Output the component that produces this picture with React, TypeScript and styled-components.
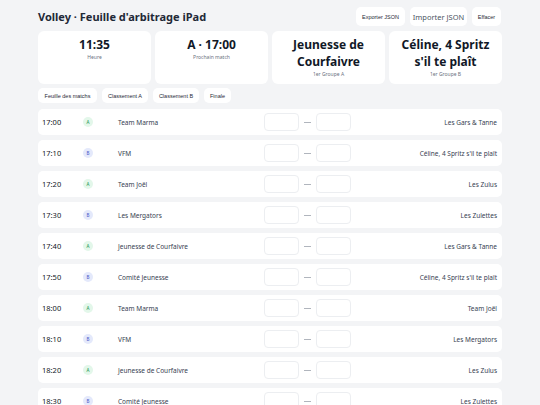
import React from "react";
import styled, { createGlobalStyle } from "styled-components";

const Global = createGlobalStyle`
  html, body { margin: 0; padding: 0; background: #f3f4f6; }
  body { font-family: "Noto Sans", "Liberation Sans", sans-serif; color: #111827; }
  * { box-sizing: border-box; }
`;

const Page = styled.div`
  width: 540px;
  padding: 7px 38px 0;
  display: flex;
  flex-direction: column;
`;

const Header = styled.header`
  display: flex;
  align-items: center;
  justify-content: space-between;
  height: 19px;
`;

const Title = styled.h1`
  margin: 0;
  font-size: 11px;
  font-weight: 700;
  color: #1f2937;
  letter-spacing: 0;
`;

const Actions = styled.div`
  display: flex;
  gap: 5px;
  margin-right: 1px;
`;

const ActionButton = styled.button<{ $w: number; $alt?: boolean }>`
  width: ${(p) => p.$w}px;
  height: 19px;
  border: none;
  border-radius: 5px;
  background: #ffffff;
  padding: 0;
  font-family: ${(p) => (p.$alt ? `"Noto Sans", sans-serif` : `"Liberation Sans", Arial, sans-serif`)};
  font-size: ${(p) => (p.$alt ? "7.5px" : "5.5px")};
  color: ${(p) => (p.$alt ? "#4b5563" : "#1f2937")};
  display: flex;
  align-items: center;
  justify-content: center;
`;

const Cards = styled.section`
  display: grid;
  grid-template-columns: repeat(4, 1fr);
  gap: 4px;
  margin-top: 5px;
`;

const Card = styled.div`
  background: #ffffff;
  border-radius: 6px;
  padding: 5px 10px 6px;
  min-height: 52px;
  text-align: center;
`;

const CardValue = styled.div`
  font-size: 12px;
  line-height: 17px;
  font-weight: 700;
  color: #111827;
`;

const CardLabel = styled.div`
  font-size: 5px;
  line-height: 7px;
  color: #6b7280;
  margin-top: 1px;
`;

const Tabs = styled.nav`
  display: flex;
  gap: 5px;
  margin-top: 4px;
`;

const Tab = styled.button<{ $w: number }>`
  width: ${(p) => p.$w}px;
  height: 15px;
  border: none;
  border-radius: 5px;
  background: #ffffff;
  padding: 0;
  font-family: "Liberation Sans", Arial, sans-serif;
  font-size: 5.5px;
  color: #1f2937;
`;

const List = styled.section`
  display: flex;
  flex-direction: column;
  gap: 5px;
  margin-top: 6px;
`;

const Row = styled.div`
  display: grid;
  grid-template-columns: 41px 35px 1fr 87px 1fr;
  align-items: center;
  height: 26px;
  padding: 0 5px 0 4px;
  background: #ffffff;
  border-radius: 5px;
`;

const Time = styled.span`
  font-size: 7.5px;
  color: #111827;
`;

const Badge = styled.span<{ $g: "A" | "B" }>`
  width: 10px;
  height: 10px;
  border-radius: 50%;
  display: flex;
  align-items: center;
  justify-content: center;
  font-size: 4.5px;
  font-weight: 500;
  background: ${(p) => (p.$g === "A" ? "#e3f7ea" : "#e4e9fb")};
  color: ${(p) => (p.$g === "A" ? "#2f9e5b" : "#4f5fc9")};
`;

const Team = styled.span<{ $right?: boolean }>`
  font-size: 6.5px;
  color: #374151;
  text-align: ${(p) => (p.$right ? "right" : "left")};
  white-space: nowrap;
`;

const Score = styled.div`
  display: flex;
  align-items: center;
  gap: 5px;
`;

const ScoreInput = styled.input`
  width: 35px;
  height: 18px;
  border: 1px solid #eceef1;
  border-radius: 4px;
  background: #ffffff;
  padding: 0;
  outline: none;
`;

const Dash = styled.span`
  width: 7px;
  height: 1px;
  background: #b0b5bd;
`;

const matches: [string, "A" | "B", string, string][] = [
  ["17:00", "A", "Team Marma", "Les Gars & Tanne"],
  ["17:10", "B", "VFM", "Céline, 4 Spritz s'il te plaît"],
  ["17:20", "A", "Team Joël", "Les Zulus"],
  ["17:30", "B", "Les Mergators", "Les Zulettes"],
  ["17:40", "A", "Jeunesse de Courfaivre", "Les Gars & Tanne"],
  ["17:50", "B", "Comité Jeunesse", "Céline, 4 Spritz s'il te plaît"],
  ["18:00", "A", "Team Marma", "Team Joël"],
  ["18:10", "B", "VFM", "Les Mergators"],
  ["18:20", "A", "Jeunesse de Courfaivre", "Les Zulus"],
  ["18:30", "B", "Comité Jeunesse", "Les Zulettes"],
];

export default function App() {
  return (
    <>
      <Global />
      <Page>
        <Header>
          <Title>Volley · Feuille d'arbitrage iPad</Title>
          <Actions>
            <ActionButton $w={49}>Exporter JSON</ActionButton>
            <ActionButton $w={57} $alt>Importer JSON</ActionButton>
            <ActionButton $w={29}>Effacer</ActionButton>
          </Actions>
        </Header>
        <Cards>
          <Card>
            <CardValue>11:35</CardValue>
            <CardLabel>Heure</CardLabel>
          </Card>
          <Card>
            <CardValue>A · 17:00</CardValue>
            <CardLabel>Prochain match</CardLabel>
          </Card>
          <Card>
            <CardValue>Jeunesse de Courfaivre</CardValue>
            <CardLabel>1er Groupe A</CardLabel>
          </Card>
          <Card>
            <CardValue>Céline, 4 Spritz s'il te plaît</CardValue>
            <CardLabel>1er Groupe B</CardLabel>
          </Card>
        </Cards>
        <Tabs>
          <Tab $w={59}>Feuille des matchs</Tab>
          <Tab $w={46}>Classement A</Tab>
          <Tab $w={46}>Classement B</Tab>
          <Tab $w={27}>Finale</Tab>
        </Tabs>
        <List>
          {matches.map(([t, g, a, b], i) => (
            <Row key={i}>
              <Time>{t}</Time>
              <Badge $g={g}>{g}</Badge>
              <Team>{a}</Team>
              <Score>
                <ScoreInput aria-label="score 1" />
                <Dash />
                <ScoreInput aria-label="score 2" />
              </Score>
              <Team $right>{b}</Team>
            </Row>
          ))}
        </List>
      </Page>
    </>
  );
}
